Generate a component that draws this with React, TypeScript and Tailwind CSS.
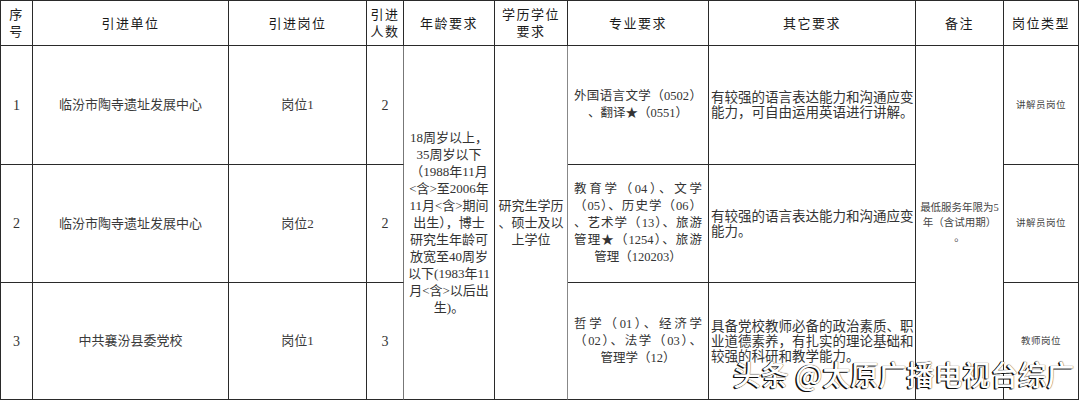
import React from 'react';

const SERIF = "font-['Liberation_Serif','Noto_Sans_CJK_SC',serif]";
const CELL = 'flex items-center justify-center border-r border-b border-[#2a2a2a] text-center';

function Lines({ lines, className = '' }: { lines: string[]; className?: string }) {
  return (
    <div className={className}>
      {lines.map((l, i) => (
        <div key={i}>{l}</div>
      ))}
    </div>
  );
}

// full lines are stretched edge to edge, the last one sits in the middle
function Justified({ lines }: { lines: string[] }) {
  return (
    <div className="w-[128px] text-[12.5px] leading-[17px] text-[#333]">
      {lines.map((l, i) => (
        <div
          key={i}
          className={i === lines.length - 1 ? 'text-center' : 'text-justify [text-align-last:justify]'}
        >
          {l}
        </div>
      ))}
    </div>
  );
}

const HEAD = [
  { col: 'col-start-1', lines: ['序', '号'] },
  { col: 'col-start-2', lines: ['引进单位'] },
  { col: 'col-start-3', lines: ['引进岗位'] },
  { col: 'col-start-4', lines: ['引进', '人数'] },
  { col: 'col-start-5', lines: ['年龄要求'] },
  { col: 'col-start-6', lines: ['学历学位', '要求'] },
  { col: 'col-start-7', lines: ['专业要求'] },
  { col: 'col-start-8', lines: ['其它要求'] },
  { col: 'col-start-9', lines: ['备注'] },
  { col: 'col-start-10', lines: ['岗位类型'] },
];

const ROWS = [
  {
    row: 'row-start-2',
    no: '1',
    unit: '临汾市陶寺遗址发展中心',
    post: '岗位1',
    count: '2',
    major: ['外国语言文学（0502）', '、翻译★（0551）'],
    other: ['有较强的语言表达能力和沟通应变', '能力，可自由运用英语进行讲解。'],
    type: '讲解员岗位',
  },
  {
    row: 'row-start-3',
    no: '2',
    unit: '临汾市陶寺遗址发展中心',
    post: '岗位2',
    count: '2',
    major: ['教育学（04）、文学', '（05）、历史学（06）', '、艺术学（13）、旅游', '管理★（1254）、旅游', '管理（120203）'],
    other: ['有较强的语言表达能力和沟通应变', '能力。'],
    type: '讲解员岗位',
  },
  {
    row: 'row-start-4',
    no: '3',
    unit: '中共襄汾县委党校',
    post: '岗位1',
    count: '3',
    major: ['哲学（01）、经济学', '（02）、法学（03）、', '管理学（12）'],
    other: ['具备党校教师必备的政治素质、职', '业道德素养，有扎实的理论基础和', '较强的科研和教学能力。'],
    type: '教师岗位',
  },
];

const AGE = [
  '18周岁以上，',
  '35周岁以下',
  '（1988年11月',
  '<含>至2006年',
  '11月<含>期间',
  '出生），博士',
  '研究生年龄可',
  '放宽至40周岁',
  '以下(1983年11',
  '月<含>以后出',
  '生)。',
];

export default function App() {
  return (
    <div className={`relative w-[1080px] h-[402px] bg-white ${SERIF}`}>
      <div className="grid grid-cols-[32px_196px_138px_37px_91px_73px_141px_207px_88px_75px] grid-rows-[45px_119px_118px_117px] border-l border-t border-[#2a2a2a] w-[1079px]">
        {HEAD.map((h) => (
          <div key={h.col} className={`${CELL} ${h.col} row-start-1 text-[13px] leading-[17px] tracking-[1.5px] text-[#1a1a1a]`}>
            <Lines lines={h.lines} />
          </div>
        ))}

        {ROWS.map((r) => (
          <React.Fragment key={r.no}>
            <div className={`${CELL} col-start-1 ${r.row} text-[14px] text-[#333]`}>{r.no}</div>
            <div className={`${CELL} col-start-2 ${r.row} text-[13px] text-[#3a3a3a]`}>{r.unit}</div>
            <div className={`${CELL} col-start-3 ${r.row} text-[13px] text-[#3a3a3a]`}>{r.post}</div>
            <div className={`${CELL} col-start-4 ${r.row} text-[14px] text-[#333] border-r-[#777]`}>{r.count}</div>
            <div className={`${CELL} col-start-7 ${r.row}`}>
              <Justified lines={r.major} />
            </div>
            <div className={`${CELL} col-start-8 ${r.row} !justify-start pl-[2px]`}>
              <Lines lines={r.other} className="text-left text-[13.5px] leading-[15px] text-[#333] whitespace-nowrap" />
            </div>
            <div className={`${CELL} col-start-10 ${r.row} text-[9.5px] tracking-[0.5px] text-[#444]`}>{r.type}</div>
          </React.Fragment>
        ))}

        <div className={`${CELL} col-start-5 row-start-2 row-span-3`}>
          <Lines lines={AGE} className="text-[13px] leading-[17px] text-[#333] whitespace-nowrap" />
        </div>
        <div className={`${CELL} col-start-6 row-start-2 row-span-3 border-r-[#888]`}>
          <Lines lines={['研究生学历', '、硕士及以', '上学位']} className="text-[13px] leading-[17px] text-[#333]" />
        </div>
        <div className={`${CELL} col-start-9 row-start-2 row-span-3`}>
          <Lines lines={['最低服务年限为5', '年（含试用期）', '。']} className="text-[10.5px] leading-[15px] text-[#444] whitespace-nowrap" />
        </div>
      </div>

      <div className="absolute left-[733px] top-[360px] whitespace-nowrap font-['Noto_Sans_CJK_SC',sans-serif] text-[28px] font-medium leading-none text-white [text-shadow:-1.5px_1px_0_#111,0_0_1px_#000,-1px_0_0_#222]">
        头条 @太原广播电视台综广
      </div>
    </div>
  );
}
